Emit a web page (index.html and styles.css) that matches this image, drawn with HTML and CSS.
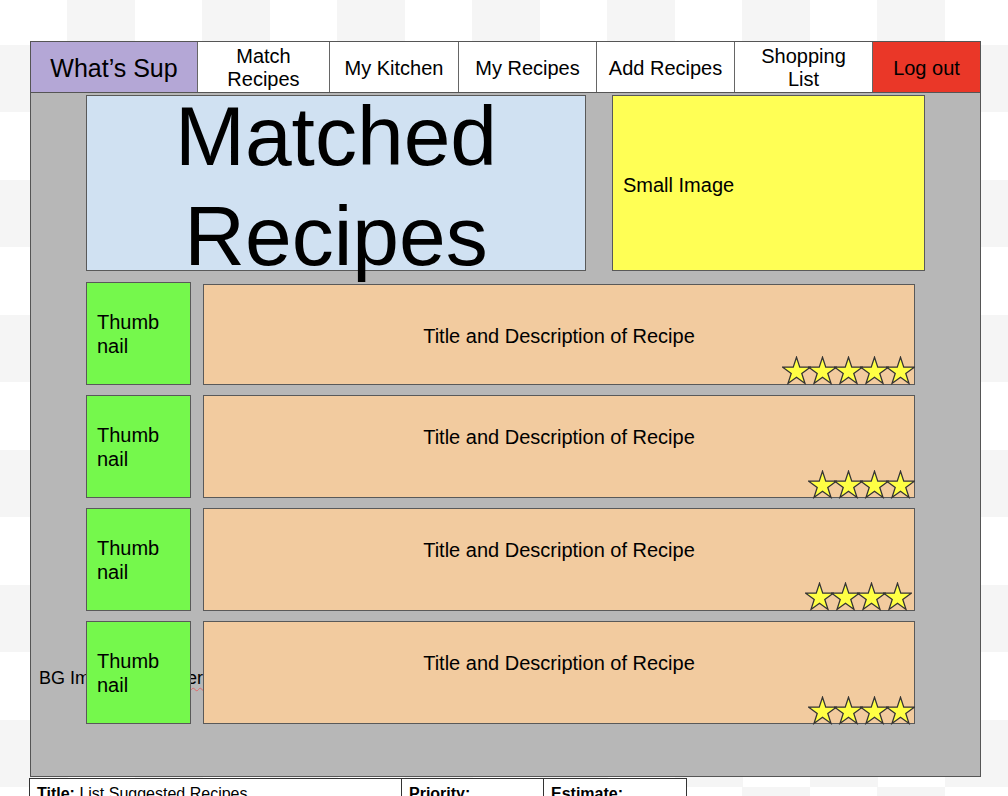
FILE: index.html
```html
<!DOCTYPE html>
<html lang="en">
<head>
<meta charset="utf-8">
<title>What's Sup - Matched Recipes</title>
<link rel="stylesheet" href="styles.css">
</head>
<body>
<div class="frame">
  <nav class="nav">
    <div class="nav-item brand">What’s Sup</div>
    <div class="nav-item">Match<br>Recipes</div>
    <div class="nav-item">My Kitchen</div>
    <div class="nav-item">My Recipes</div>
    <div class="nav-item">Add Recipes</div>
    <div class="nav-item">Shopping<br>List</div>
    <div class="nav-item logout">Log out</div>
  </nav>
  <main class="main">
    <span class="bg-label">BG Image <span class="typo">Container</span></span>
    <div class="content">
      <div class="hero">
        <div class="title-box"><h1 class="title">Matched<br>Recipes</h1></div>
        <div class="small-image">Small Image</div>
      </div>
      <div class="rows">
        <div class="row">
          <div class="thumb">Thumb<br>nail</div>
          <div class="desc desc--first">
            <p class="desc-text">Title and Description of Recipe</p>
            <div class="stars stars--five">
              <svg class="star" viewBox="-0.5 0 30 29.5"><polygon points="14.5,1 17.87,11.36 28.77,11.36 19.95,17.77 23.32,28.14 14.5,21.73 5.68,28.14 9.05,17.77 0.23,11.36 11.13,11.36"/></svg>
              <svg class="star" viewBox="-0.5 0 30 29.5"><polygon points="14.5,1 17.87,11.36 28.77,11.36 19.95,17.77 23.32,28.14 14.5,21.73 5.68,28.14 9.05,17.77 0.23,11.36 11.13,11.36"/></svg>
              <svg class="star" viewBox="-0.5 0 30 29.5"><polygon points="14.5,1 17.87,11.36 28.77,11.36 19.95,17.77 23.32,28.14 14.5,21.73 5.68,28.14 9.05,17.77 0.23,11.36 11.13,11.36"/></svg>
              <svg class="star" viewBox="-0.5 0 30 29.5"><polygon points="14.5,1 17.87,11.36 28.77,11.36 19.95,17.77 23.32,28.14 14.5,21.73 5.68,28.14 9.05,17.77 0.23,11.36 11.13,11.36"/></svg>
              <svg class="star" viewBox="-0.5 0 30 29.5"><polygon points="14.5,1 17.87,11.36 28.77,11.36 19.95,17.77 23.32,28.14 14.5,21.73 5.68,28.14 9.05,17.77 0.23,11.36 11.13,11.36"/></svg>
            </div>
          </div>
        </div>
        <div class="row">
          <div class="thumb">Thumb<br>nail</div>
          <div class="desc">
            <p class="desc-text">Title and Description of Recipe</p>
            <div class="stars">
              <svg class="star" viewBox="-0.5 0 30 29.5"><polygon points="14.5,1 17.87,11.36 28.77,11.36 19.95,17.77 23.32,28.14 14.5,21.73 5.68,28.14 9.05,17.77 0.23,11.36 11.13,11.36"/></svg>
              <svg class="star" viewBox="-0.5 0 30 29.5"><polygon points="14.5,1 17.87,11.36 28.77,11.36 19.95,17.77 23.32,28.14 14.5,21.73 5.68,28.14 9.05,17.77 0.23,11.36 11.13,11.36"/></svg>
              <svg class="star" viewBox="-0.5 0 30 29.5"><polygon points="14.5,1 17.87,11.36 28.77,11.36 19.95,17.77 23.32,28.14 14.5,21.73 5.68,28.14 9.05,17.77 0.23,11.36 11.13,11.36"/></svg>
              <svg class="star" viewBox="-0.5 0 30 29.5"><polygon points="14.5,1 17.87,11.36 28.77,11.36 19.95,17.77 23.32,28.14 14.5,21.73 5.68,28.14 9.05,17.77 0.23,11.36 11.13,11.36"/></svg>
            </div>
          </div>
        </div>
        <div class="row">
          <div class="thumb">Thumb<br>nail</div>
          <div class="desc">
            <p class="desc-text">Title and Description of Recipe</p>
            <div class="stars stars--shifted">
              <svg class="star" viewBox="-0.5 0 30 29.5"><polygon points="14.5,1 17.87,11.36 28.77,11.36 19.95,17.77 23.32,28.14 14.5,21.73 5.68,28.14 9.05,17.77 0.23,11.36 11.13,11.36"/></svg>
              <svg class="star" viewBox="-0.5 0 30 29.5"><polygon points="14.5,1 17.87,11.36 28.77,11.36 19.95,17.77 23.32,28.14 14.5,21.73 5.68,28.14 9.05,17.77 0.23,11.36 11.13,11.36"/></svg>
              <svg class="star" viewBox="-0.5 0 30 29.5"><polygon points="14.5,1 17.87,11.36 28.77,11.36 19.95,17.77 23.32,28.14 14.5,21.73 5.68,28.14 9.05,17.77 0.23,11.36 11.13,11.36"/></svg>
              <svg class="star" viewBox="-0.5 0 30 29.5"><polygon points="14.5,1 17.87,11.36 28.77,11.36 19.95,17.77 23.32,28.14 14.5,21.73 5.68,28.14 9.05,17.77 0.23,11.36 11.13,11.36"/></svg>
            </div>
          </div>
        </div>
        <div class="row">
          <div class="thumb">Thumb<br>nail</div>
          <div class="desc">
            <p class="desc-text">Title and Description of Recipe</p>
            <div class="stars">
              <svg class="star" viewBox="-0.5 0 30 29.5"><polygon points="14.5,1 17.87,11.36 28.77,11.36 19.95,17.77 23.32,28.14 14.5,21.73 5.68,28.14 9.05,17.77 0.23,11.36 11.13,11.36"/></svg>
              <svg class="star" viewBox="-0.5 0 30 29.5"><polygon points="14.5,1 17.87,11.36 28.77,11.36 19.95,17.77 23.32,28.14 14.5,21.73 5.68,28.14 9.05,17.77 0.23,11.36 11.13,11.36"/></svg>
              <svg class="star" viewBox="-0.5 0 30 29.5"><polygon points="14.5,1 17.87,11.36 28.77,11.36 19.95,17.77 23.32,28.14 14.5,21.73 5.68,28.14 9.05,17.77 0.23,11.36 11.13,11.36"/></svg>
              <svg class="star" viewBox="-0.5 0 30 29.5"><polygon points="14.5,1 17.87,11.36 28.77,11.36 19.95,17.77 23.32,28.14 14.5,21.73 5.68,28.14 9.05,17.77 0.23,11.36 11.13,11.36"/></svg>
            </div>
          </div>
        </div>
      </div>
    </div>
  </main>
</div>
<table class="story">
  <tr>
    <td class="story-title"><b>Title:</b> List Suggested Recipes</td>
    <td class="story-priority"><b>Priority:</b></td>
    <td class="story-estimate"><b>Estimate:</b></td>
  </tr>
</table>
</body>
</html>
```

FILE: styles.css
```css
html, body {
  margin: 0;
  padding: 0;
  height: 100%;
  overflow: hidden;
}

body {
  font-family: "Liberation Sans", Arial, sans-serif;
  color: #000;
  background-color: #fff;
  background-image: repeating-conic-gradient(#f5f5f5 0 25%, #ffffff 0 50%);
  background-size: 135px 135px;
  background-position: 0 -23px;
  padding: 41px 0 0 30px;
  box-sizing: border-box;
}

.frame {
  width: 951px;
  height: 736px;
  box-sizing: border-box;
  border: 1px solid #555;
  background: #b7b7b7;
  display: flex;
  flex-direction: column;
}

.nav {
  display: grid;
  grid-template-columns: 167px 132px 129px 138px 138px 138px 1fr;
  height: 51px;
  border-bottom: 1px solid #555;
  box-sizing: border-box;
  background: #fff;
}

.nav-item {
  display: flex;
  align-items: center;
  justify-content: center;
  text-align: center;
  font-size: 20px;
  line-height: 23px;
  padding-top: 2px;
  border-right: 1px solid #666;
  background: #fff;
}

.nav-item.brand {
  background: #b4a7d6;
  font-size: 25px;
}

.nav-item.logout {
  background: #ea3728;
  border-right: none;
}

.main {
  position: relative;
  flex: 1;
}

.bg-label {
  position: absolute;
  left: 8px;
  top: 574px;
  font-size: 18px;
  line-height: 22px;
  white-space: nowrap;
  z-index: 0;
}

.typo {
  text-decoration: underline wavy #e06666;
  text-decoration-thickness: 1px;
  text-underline-offset: 3px;
}

.content {
  position: relative;
  z-index: 1;
  padding: 2px 0 0 55px;
}

.hero {
  display: flex;
  gap: 26px;
  height: 176px;
}

.title-box {
  width: 500px;
  box-sizing: border-box;
  border: 1px solid #595959;
  background: #d0e1f2;
}

.title {
  margin: -10px 0 0;
  font-size: 84px;
  line-height: 100px;
  font-weight: normal;
  text-align: center;
}

.small-image {
  width: 313px;
  box-sizing: border-box;
  border: 1px solid #595959;
  background: #ffff55;
  font-size: 20px;
  line-height: 23px;
  padding: 4px 0 0 10px;
  display: flex;
  align-items: center;
}

.rows {
  margin-top: 11px;
  display: flex;
  flex-direction: column;
  gap: 10px;
}

.row {
  display: grid;
  grid-template-columns: 105px 712px;
  column-gap: 12px;
  height: 103px;
}

.thumb {
  box-sizing: border-box;
  border: 1px solid #595959;
  background: #75f84c;
  font-size: 20px;
  line-height: 24px;
  padding-left: 10px;
  display: flex;
  align-items: center;
}

.desc {
  position: relative;
  box-sizing: border-box;
  border: 1px solid #595959;
  background: #f2cb9f;
  padding-top: 30px;
}

.desc--first {
  margin-top: 2px;
  padding-top: 40px;
}

.desc-text {
  margin: 0;
  font-size: 20px;
  line-height: 23px;
  text-align: center;
}

.stars {
  position: absolute;
  right: -1px;
  bottom: -2px;
  display: flex;
}

.stars--five {
  bottom: -1px;
}

.stars--shifted {
  right: 2px;
  bottom: -1px;
}

.star {
  width: 29px;
  height: 29px;
  margin-left: -3px;
  display: block;
}

.star polygon {
  fill: #ffff44;
  stroke: #333;
  stroke-width: 1.3;
  stroke-linejoin: miter;
}

.story {
  margin: 1px 0 0 -1px;
  border-collapse: collapse;
  background: #fff;
  font-size: 16px;
  line-height: 18px;
}

.story td {
  border: 1px solid #333;
  padding: 6px 7px;
  vertical-align: top;
  box-sizing: border-box;
}

.story-title { width: 372px; }
.story-priority { width: 142px; }
.story-estimate { width: 143px; }
```
